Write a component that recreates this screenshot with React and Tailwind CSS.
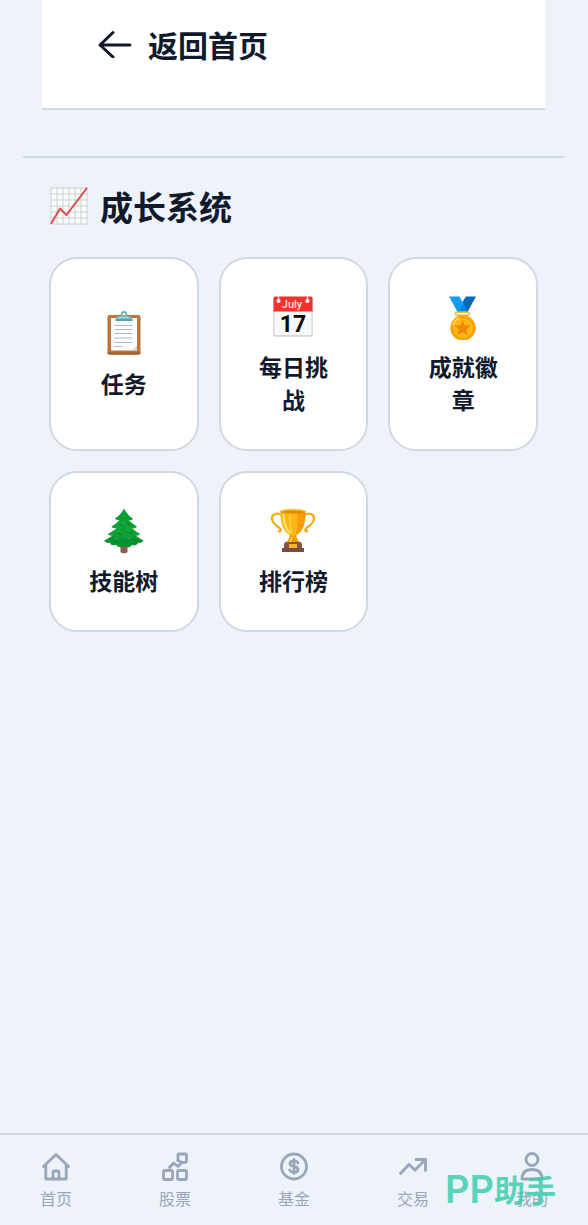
import React from "react";

function ChartIcon() {
  return (
    <svg className="size-10 shrink-0" viewBox="0 0 40 40" fill="none" aria-hidden="true">
      <rect x="2" y="2" width="36" height="36" fill="#fafcfb" />
      <path
        d="M2 1.5V38.5M8 1.5V38.5M14 1.5V38.5M20 1.5V38.5M26 1.5V38.5M32 1.5V38.5M38 1.5V38.5M1.500 2H38.500M1.500 8H38.500M1.500 14H38.500M1.500 20H38.500M1.500 26H38.500M1.500 32H38.500M1.500 38H38.500"
        stroke="#c3ceca"
        strokeWidth="0.9"
      />
      <path d="M2.500 37L11 22.500L17.500 29L37.500 2.500" stroke="#dc4a4e" strokeWidth="2" strokeLinejoin="round" strokeLinecap="round" />
    </svg>
  );
}

function ClipboardIcon() {
  return (
    <svg className="size-12" viewBox="0 0 48 48" fill="none" aria-hidden="true">
      <rect x="7.500" y="6" width="33" height="39.500" rx="2" fill="#bb7539" />
      <path d="M7.500 43v.8a2 2 0 0 0 2 2h29a2 2 0 0 0 2-2V43z" fill="#a9642f" />
      <path d="M11 9H37V41.500H11z" fill="#fcfdfe" />
      <path d="M37 37V41.500H32z" fill="#cfd8df" />
      <path d="M14.500 16.500h18M14.500 20.500h18M14.500 24.500h18M14.500 29h18M14.500 33.500h18M14.500 37.500h8" stroke="#aab9c7" strokeWidth="1" />
      <circle cx="24" cy="5.500" r="2.500" stroke="#76b1ba" strokeWidth="1.800" />
      <path d="M15.500 11.700c0-3 1.300-4.300 4.200-4.600l2-.6h4.600l2 .6c2.900.3 4.300 1.600 4.300 4.600z" fill="#79bcc5" />
      <path d="M15.500 10.300h17.100v1.600H15.500z" fill="#5998a5" />
      <path d="M19 8.500h9" stroke="#a7dce0" strokeWidth="1" strokeLinecap="round" />
    </svg>
  );
}

function CalendarIcon() {
  return (
    <svg className="size-12" viewBox="0 0 48 48" aria-hidden="true">
      <rect x="4.500" y="5" width="39" height="39.500" rx="1.800" fill="#b9b9b9" />
      <rect x="5.300" y="6" width="37.400" height="37.500" rx="1" fill="#f8f8f8" />
      <path d="M4.500 19.500V6a1.500 1.500 0 0 1 1.500-1.500h36A1.500 1.500 0 0 1 43.500 6v13.500z" fill="#f5302d" />
      <path d="M9.500 3.500v5M38.500 3.500v5" stroke="#f0d7d5" strokeWidth="1.300" />
      <circle cx="9.500" cy="9" r="2.100" fill="#fff" />
      <circle cx="38.500" cy="9" r="2.100" fill="#fff" />
      <text x="23" y="16" textAnchor="middle" fontFamily="Roboto, sans-serif" fontWeight="500" fontSize="11" fill="#ffe6df">July</text>
      <text x="24" y="40" textAnchor="middle" fontFamily="Roboto, sans-serif" fontWeight="700" fontSize="23" fill="#080808">17</text>
    </svg>
  );
}

function MedalIcon() {
  return (
    <svg className="size-12" viewBox="0 0 48 48" fill="none" aria-hidden="true">
      <path d="M24 9L27 4.500H37L28.500 20H20z" fill="#0767bd" />
      <path d="M10 4.500H20.500L29 20H18.500z" fill="#159cf2" />
      <path d="M29 20L24.500 12L20 20z" fill="#0b83dc" />
      <rect x="16.500" y="20" width="14" height="3.500" rx="1.700" fill="#fff6d5" stroke="#e8b32f" strokeWidth="1.300" />
      <circle cx="24" cy="36" r="12.700" fill="#f8a60b" />
      <circle cx="24" cy="36" r="10.500" fill="#ffb915" stroke="#e79408" strokeWidth="0.800" />
      <path d="M23.500 27.500l2.300 5.700 6.200.4-4.700 4 1.500 6-5.300-3.300-5.200 3.300 1.500-6-4.800-4 6.200-.4z" fill="#f28809" />
      <path d="M14 33c1-3.500 3-5.700 6-6.700" stroke="#ffe071" strokeWidth="1.300" strokeLinecap="round" />
    </svg>
  );
}

function TreeIcon() {
  return (
    <svg className="size-12" viewBox="0 0 48 48" fill="none" aria-hidden="true">
      <path d="M20.500 39h7v7c-1.500 1.700-5.500 1.700-7 0z" fill="#8b5b53" />
      <path d="M24 17c5 8 11 13 19.500 17.500-1.300 2.600-4 2.500-5.300 2.300-1 3-4.800 3.200-6 2-2 3.200-6 3.200-8.200 1.200-2.300 2-6.300 1.800-8-1.200-2.700 1.200-5.300.4-6.200-2-2.600.3-5-.2-5.600-2.300C13 30 20 25 24 17z" fill="#0a942f" />
      <path d="M24 12c4 7.500 9 11.800 16 15.700-1.500 2.200-4 2.400-5.300 2-1.600 2.600-4.800 2.700-6.200 1.500-2.400 2.200-6.500 2.200-8.700 0-2 1.200-5 .8-6.200-1.500-2.500.5-4.700-.2-5.600-1.900C15 24.500 20 20 24 12z" fill="#109f35" />
      <path d="M24 7c3.300 6.300 7.700 10.600 13 13.500-1.500 2-3.700 2.200-5 1.700-1.500 2.400-4.300 2.300-5.300 1.400-1.800 1.200-4 1.200-5.500 0-1.800 1-4.300.4-5-1.400-2 .5-4-.2-4.800-1.700C17 17.500 21 13 24 7z" fill="#0aa638" />
      <path d="M24 2.500c2.700 5 5.500 8 9 10.200-1.200 1.600-2.800 1.800-4 1.400-1.600 1.800-3.700 1.700-5 .8-1.400 1-3.600.8-4.700-.8-1.600.3-3.400-.2-4.300-1.500C19 10 22 6.500 24 2.500z" fill="#099e35" />
      <path d="M20 18.500l3 1.500M27 17l3 2M18 27l4 1.500M28 26l4 1.500M14 34.500l4 1.500M24 34l4 2M32 33l4 1.500" stroke="#088430" strokeWidth="1.300" strokeLinecap="round" />
      <path d="M23 9l1.500 1.500M22 15.500l2 1M17 25l3 .8M27 23.500l2 1M15 32l3 1M27 31.500l3 1" stroke="#27bd4c" strokeWidth="1" strokeLinecap="round" />
    </svg>
  );
}

function TrophyIcon() {
  return (
    <svg className="size-12" viewBox="0 0 48 48" fill="none" aria-hidden="true">
      <path d="M13 9C8 6 2.500 8 3 13c.5 5 5.500 7 8 9.500 1.700 1.700.2 3.500-1 2.500" stroke="#f2ad19" strokeWidth="2.300" strokeLinecap="round" />
      <path d="M35 9c5-3 10.500-1 10 4-.5 5-5.500 7-8 9.500-1.700 1.700-.2 3.500 1 2.500" stroke="#f2ad19" strokeWidth="2.300" strokeLinecap="round" />
      <path d="M21 28h6c.5 4 2 7 4.500 9h-15c2.500-2 4-5 4.500-9z" fill="#ee9e0d" />
      <path d="M11.500 5.500c-.2 12 2.500 22.500 12.500 24.500 10-2 12.700-12.500 12.500-24.500z" fill="#ffb512" />
      <path d="M28 6h8.500c0 11-2.500 20.500-10 23.500 2-6 2.300-15 1.500-23.500z" fill="#f79b08" />
      <path d="M14.500 9c.3 8 2.300 14 6 17" stroke="#ffe26d" strokeWidth="2.400" strokeLinecap="round" />
      <path d="M21 8c-.2 8 .2 14 2 19" stroke="#ffd048" strokeWidth="1.600" strokeLinecap="round" />
      <ellipse cx="24" cy="5.500" rx="12.700" ry="2.200" fill="#df8b0a" />
      <path d="M12 5.200c3-2.300 21-2.300 24 0" stroke="#ffc83b" strokeWidth="1.300" />
      <path d="M22.700 31c-.3 3-1 4.500-2 5.500" stroke="#ffdd65" strokeWidth="1.300" />
      <path d="M15 37.500l1.500-1.500h15l1.500 1.500v5H15z" fill="#8a5148" />
      <path d="M13 42h22v4H13z" fill="#7d4a42" />
      <rect x="20" y="38" width="8" height="4" rx=".5" fill="#f6ba20" />
    </svg>
  );
}

function NavSvg({ children }) {
  return (
    <svg className="size-8" viewBox="0 0 32 32" fill="none" stroke="currentColor" strokeWidth="2.8" strokeLinejoin="round" strokeLinecap="round" aria-hidden="true">
      {children}
    </svg>
  );
}

const HomeIcon = () => (
  <NavSvg>
    <path d="M3.500 16.500L16 4.500l12.500 12M5.800 15v14h20.400V15" />
    <path d="M13 29v-6.500a1.500 1.500 0 0 1 1.500-1.500h3a1.500 1.500 0 0 1 1.500 1.500V29" />
  </NavSvg>
);
const StockIcon = () => (
  <NavSvg>
    <rect x="4.500" y="20.500" width="9" height="9" rx="1" />
    <rect x="18.500" y="20.500" width="9" height="9" rx="1" />
    <path d="M19 10.500V5a1 1 0 0 1 1-1h6.500a1 1 0 0 1 1 1v6a1.300 1.300 0 0 1-1.300 1.300h-3.400" />
    <path d="M10.500 17.500l4.200-4.500 4.300 3.500 4-4-4-2" />
  </NavSvg>
);
const FundIcon = () => (
  <NavSvg>
    <circle cx="16" cy="16.500" r="12.500" />
    <path d="M20 13c-.7-1.500-2-2.200-4-2.200-2.400 0-4 1-4 2.700 0 1.800 1.400 2.400 4 2.900s4 1.300 4 3c0 1.800-1.600 2.900-4 2.900-2.100 0-3.600-.8-4.300-2.300M16 9.500v14" />
  </NavSvg>
);
const TradeIcon = () => (
  <NavSvg>
    <path d="M3.500 23.500l8.500-9 6 5.500L28.500 9.500M19 9.500h9.500v11" strokeLinejoin="miter" />
  </NavSvg>
);
const UserIcon = () => (
  <NavSvg>
    <circle cx="16" cy="9.500" r="6" />
    <path d="M6 29c0-6.500 4-9.500 10-9.500s10 3 10 9.500z" />
  </NavSvg>
);

const cards = [
  { label: "任务", Icon: ClipboardIcon },
  { label: "每日挑战", Icon: CalendarIcon },
  { label: "成就徽章", Icon: MedalIcon },
  { label: "技能树", Icon: TreeIcon },
  { label: "排行榜", Icon: TrophyIcon },
];

const tabs = [
  { label: "首页", Icon: HomeIcon },
  { label: "股票", Icon: StockIcon },
  { label: "基金", Icon: FundIcon },
  { label: "交易", Icon: TradeIcon },
  { label: "我的", Icon: UserIcon },
];

export default function App() {
  return (
    <div className="flex min-h-screen flex-col bg-[#eef3fa] font-['Noto_Sans_CJK_SC',sans-serif] text-[#111a2c]">
      <header className="mr-[43px] ml-[42px] border-b-2 border-[#d0dae2] bg-white px-14 pt-[22px] pb-[42px]">
        <a href="#home" className="flex items-center gap-4 text-3xl leading-11 font-bold">
          <svg className="h-7 w-[34px]" viewBox="0 0 34 28" fill="none" stroke="currentColor" strokeWidth="3" strokeLinecap="round" strokeLinejoin="round" aria-hidden="true">
            <path d="M32 15H2M15 2.500L2 15l13 12" />
          </svg>
          返回首页
        </a>
      </header>

      <main className="mr-6 ml-[23px] mt-[46px] grow border-t-2 border-[#d0dae4] px-[26px] pt-6">
        <h1 className="flex items-center gap-[11px] text-[33px] leading-12 font-bold">
          <ChartIcon />
          成长系统
        </h1>
        <div className="mt-[27px] grid grid-cols-3 gap-5">
          {cards.map(({ label, Icon }) => (
            <button
              key={label}
              type="button"
              className="flex flex-col items-center justify-center gap-[10px] rounded-[28px] border-2 border-[#d0d9e3] bg-white px-8 py-[33px] text-[23px] leading-[33px] font-bold"
            >
              <Icon />
              <span>{label}</span>
            </button>
          ))}
        </div>
      </main>

      <nav className="relative border-t-2 border-[#cdd6e1] px-10 pt-[15px] pb-[15px] text-[#98a6ba]">
        <ul className="flex justify-between">
          {tabs.map(({ label, Icon }) => (
            <li key={label}>
              <a href="#tab" className="flex flex-col items-center gap-1 text-base leading-6">
                <Icon />
                {label}
              </a>
            </li>
          ))}
        </ul>
        <div className="pointer-events-none absolute right-8 bottom-3 flex items-center text-[#3fceb0] opacity-85">
          <span className="font-[Inter] text-[38px] leading-12 font-semibold">PP</span>
          <span className="text-[31px] leading-12 font-bold">助手</span>
        </div>
      </nav>
    </div>
  );
}
